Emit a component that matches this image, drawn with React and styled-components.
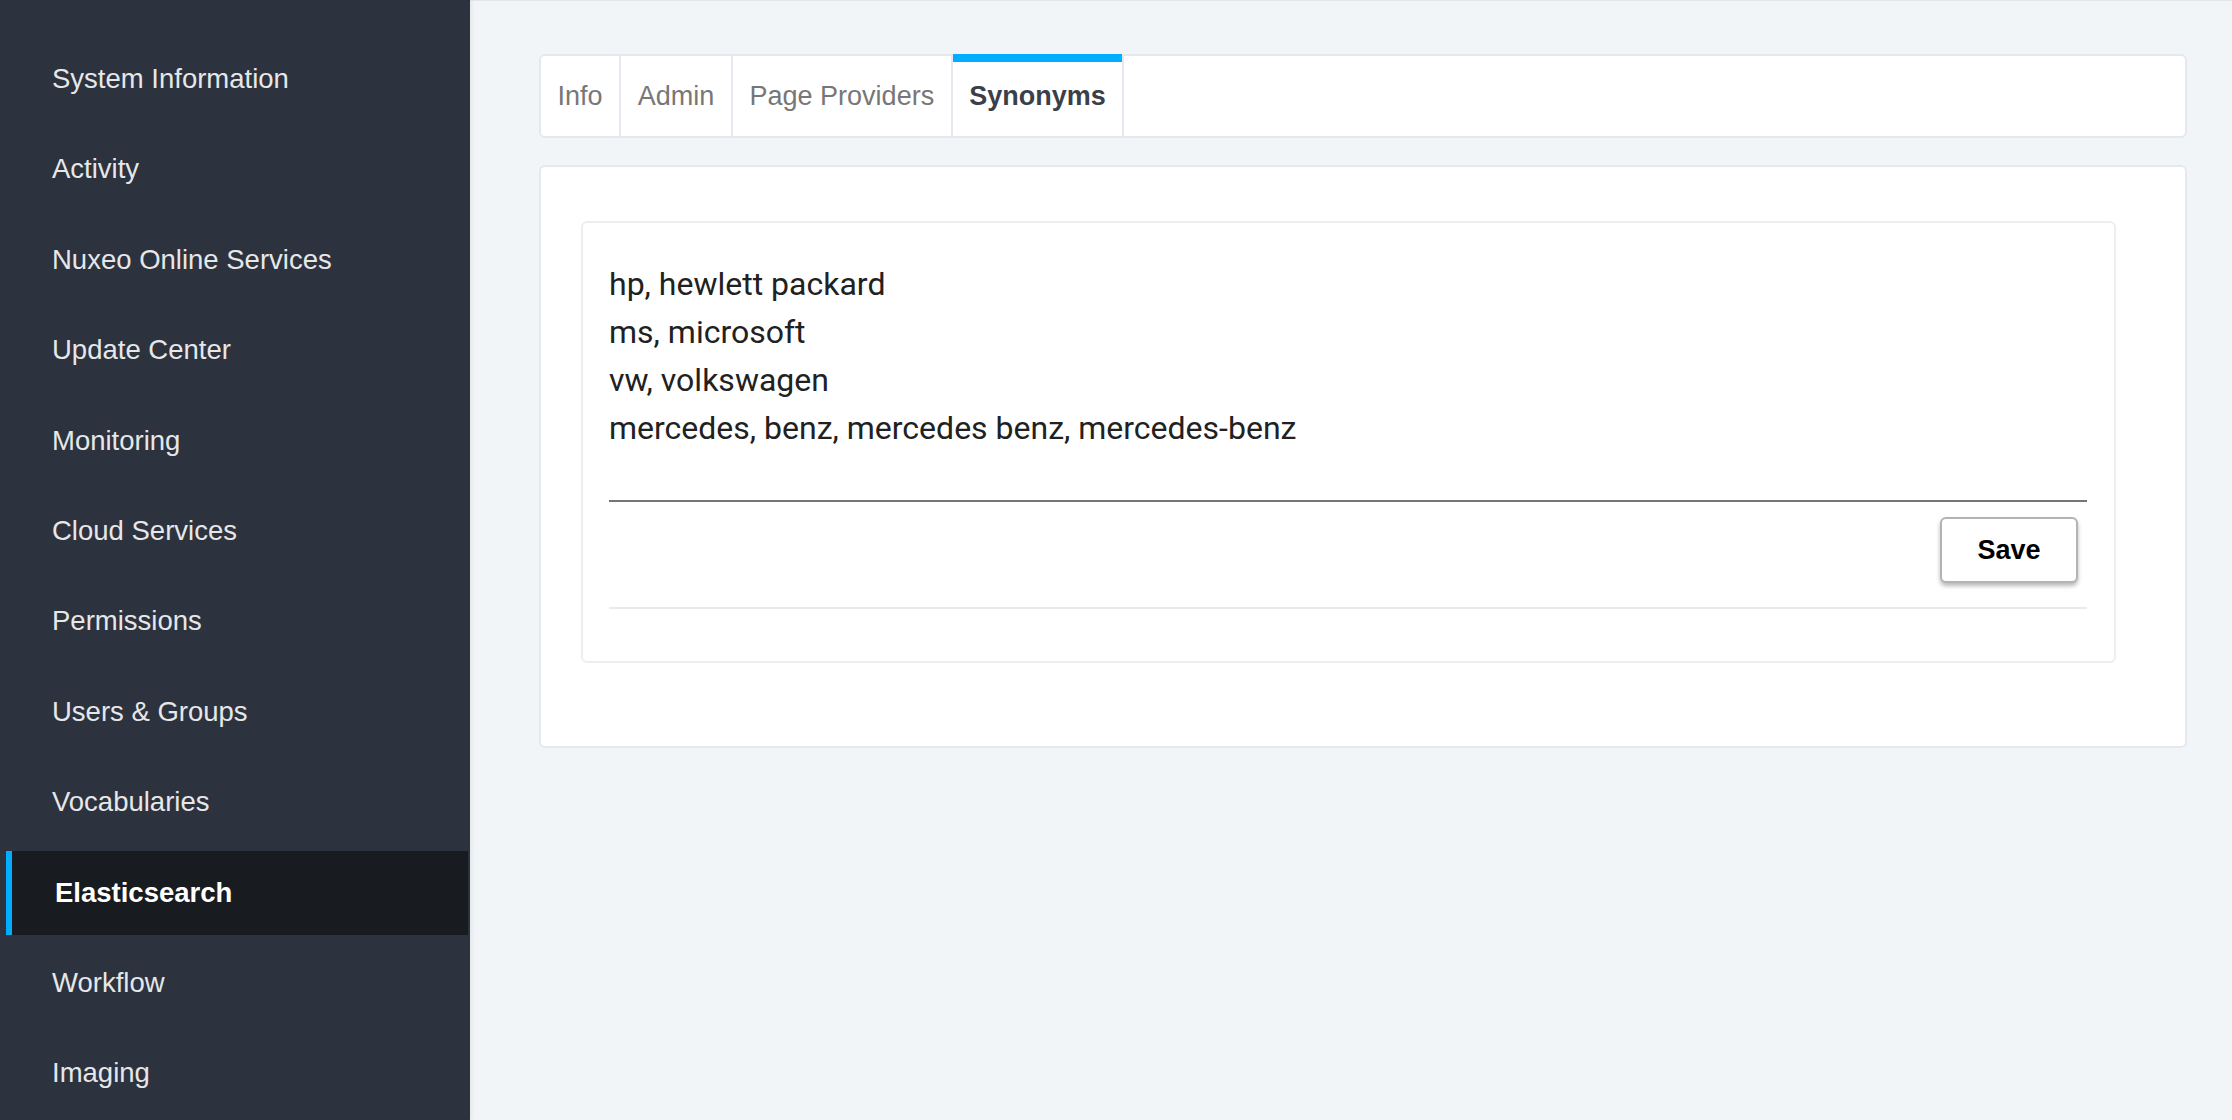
import styled, { createGlobalStyle } from 'styled-components';

const GlobalStyle = createGlobalStyle`
  html, body {
    margin: 0;
    padding: 0;
    background: #f1f5f8;
  }
  * {
    box-sizing: border-box;
  }
`;

const Layout = styled.div`
  display: flex;
  min-height: 100vh;
  font-family: "Liberation Sans", Arial, sans-serif;
`;

const Sidebar = styled.nav`
  width: 470px;
  flex-shrink: 0;
  background: #2c323e;
  padding: 37px 2px 0 6px;
  display: flex;
  flex-direction: column;
  gap: 6.4px;
  box-shadow: 2px 0 4px rgba(0, 0, 0, 0.06);
  z-index: 1;
`;

const NavItem = styled.a`
  display: flex;
  align-items: center;
  height: 84px;
  padding-left: ${(p) => (p.$active ? '43px' : '46px')};
  border-left: ${(p) => (p.$active ? '6px solid #00adff' : 'none')};
  background: ${(p) => (p.$active ? '#181b20' : 'transparent')};
  color: ${(p) => (p.$active ? '#ffffff' : '#e6e7e9')};
  font-size: 27.5px;
  font-weight: ${(p) => (p.$active ? 700 : 400)};
  text-decoration: none;
  white-space: nowrap;
  cursor: pointer;
`;

const Main = styled.main`
  flex: 1;
  padding: 54px 45px 40px 69px;
  box-shadow: inset 0 1px 0 #e2e6eb;
  display: flex;
  flex-direction: column;
  gap: 27px;
`;

const TabBar = styled.div`
  display: flex;
  height: 84px;
  background: #ffffff;
  border: 2px solid #e5e8ee;
  border-radius: 6px;
`;

const Tab = styled.div`
  position: relative;
  display: flex;
  align-items: center;
  padding: 0 16.6px;
  border-right: 2px solid #e5e8ee;
  font-size: 27px;
  font-weight: ${(p) => (p.$active ? 700 : 400)};
  color: ${(p) => (p.$active ? '#3b3f4a' : '#777777')};
  cursor: pointer;

  &::before {
    content: '';
    display: ${(p) => (p.$active ? 'block' : 'none')};
    position: absolute;
    top: -2px;
    left: 0;
    right: 0;
    height: 8px;
    background: #00adff;
  }
`;

const Card = styled.section`
  background: #ffffff;
  border: 2px solid #e5e8ee;
  border-radius: 6px;
  padding: 54px 69px 83px 40px;
`;

const Editor = styled.div`
  border: 2px solid #eceef1;
  border-radius: 6px;
  padding: 37px 27px 52px 26px;
  display: flex;
  flex-direction: column;
`;

const SynonymsInput = styled.textarea`
  display: block;
  width: 100%;
  height: 242px;
  margin: 0;
  padding: 0;
  border: none;
  border-bottom: 2px solid #757575;
  outline: none;
  resize: none;
  background: transparent;
  font-family: Roboto, "Noto Sans", sans-serif;
  font-size: 32px;
  line-height: 48px;
  color: #212121;
  overflow: hidden;
`;

const Actions = styled.div`
  display: flex;
  justify-content: flex-end;
  padding: 15px 9px 24px 0;
  border-bottom: 2px solid #e8eaee;
`;

const SaveButton = styled.button`
  width: 138px;
  height: 66px;
  background: #ffffff;
  border: 2px solid #b3b3b3;
  border-radius: 6px;
  box-shadow: 0 3px 4px rgba(0, 0, 0, 0.28);
  font-family: "Liberation Sans", Arial, sans-serif;
  font-size: 27px;
  font-weight: 700;
  color: #000000;
  cursor: pointer;
`;

const menu = [
  'System Information',
  'Activity',
  'Nuxeo Online Services',
  'Update Center',
  'Monitoring',
  'Cloud Services',
  'Permissions',
  'Users & Groups',
  'Vocabularies',
  'Elasticsearch',
  'Workflow',
  'Imaging',
];

const tabs = ['Info', 'Admin', 'Page Providers', 'Synonyms'];

const synonyms = [
  'hp, hewlett packard',
  'ms, microsoft',
  'vw, volkswagen',
  'mercedes, benz, mercedes benz, mercedes-benz',
].join('\n');

export default function App() {
  return (
    <>
      <GlobalStyle />
      <Layout>
        <Sidebar>
          {menu.map((item) => (
            <NavItem key={item} $active={item === 'Elasticsearch'}>
              {item}
            </NavItem>
          ))}
        </Sidebar>
        <Main>
          <TabBar>
            {tabs.map((tab) => (
              <Tab key={tab} $active={tab === 'Synonyms'}>
                {tab}
              </Tab>
            ))}
          </TabBar>
          <Card>
            <Editor>
              <SynonymsInput defaultValue={synonyms} spellCheck={false} />
              <Actions>
                <SaveButton>Save</SaveButton>
              </Actions>
            </Editor>
          </Card>
        </Main>
      </Layout>
    </>
  );
}
